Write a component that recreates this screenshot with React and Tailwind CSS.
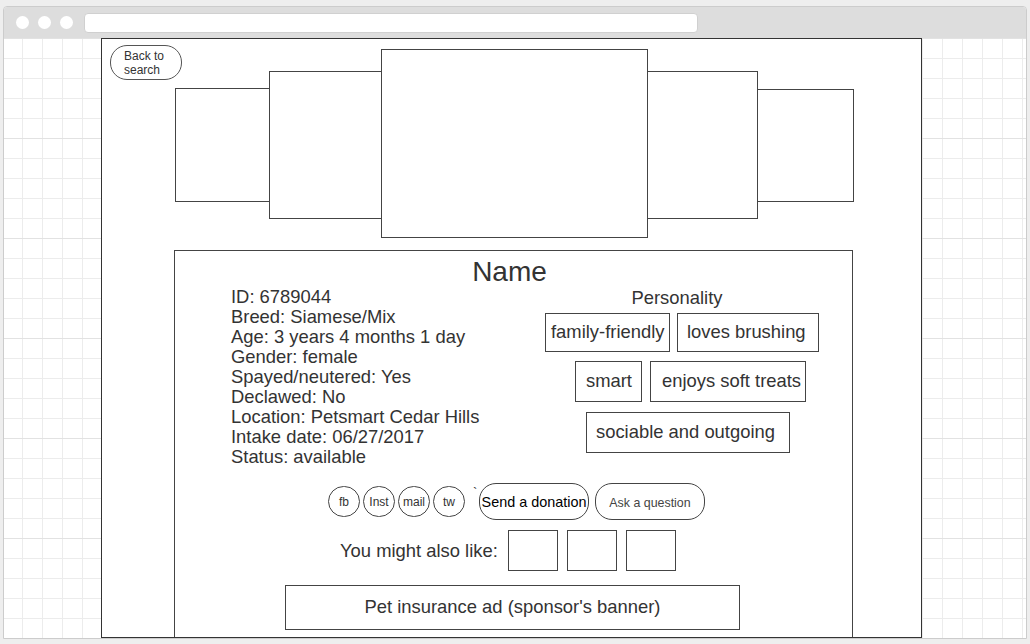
import React from "react";

const info = [
    "ID: 6789044",
    "Breed: Siamese/Mix",
    "Age: 3 years 4 months 1 day",
    "Gender: female",
    "Spayed/neutered: Yes",
    "Declawed: No",
    "Location: Petsmart Cedar Hills",
    "Intake date: 06/27/2017",
    "Status: available",
];

const socials = ["fb", "Inst", "mail", "tw"];

function Tag({ label, className }) {
    return (
        <div className={`flex items-center shrink-0 border border-[#444] whitespace-nowrap leading-[20px] pb-px ${className}`}>
            {label}
        </div>
    );
}

export default function App() {
    return (
        <div className="w-[1030px] h-[644px] bg-[#eeeeee] pt-[6px] pl-[3px] overflow-hidden font-['Liberation_Sans',Arial,sans-serif] text-[#333]">
            <div className="w-[1024px] h-[633px] rounded-t-[4px] border border-[#cccccc] bg-white flex flex-col overflow-hidden">
                {/* browser title bar */}
                <div className="h-[31px] shrink-0 bg-[#dddddd] flex items-center pl-[12px]">
                    <div className="flex gap-[9px]">
                        <span className="w-[13px] h-[13px] rounded-full bg-white" />
                        <span className="w-[13px] h-[13px] rounded-full bg-white" />
                        <span className="w-[13px] h-[13px] rounded-full bg-white" />
                    </div>
                    <div className="ml-[11px] w-[614px] h-[20px] rounded-[4px] bg-white border border-[#d0d0d0]" />
                </div>

                {/* grid canvas */}
                <div className="flex-1 bg-white bg-[linear-gradient(to_bottom,#e2e2e2_1px,transparent_1px),linear-gradient(to_right,#ececec_1px,transparent_1px),linear-gradient(to_bottom,#ececec_1px,transparent_1px)] bg-[size:100px_100px,20px_20px,20px_20px] bg-[position:18px_0px]">
                    <div className="ml-[97px] w-[821px] h-[600px] border border-[#333] bg-white overflow-hidden">
                        {/* back button + carousel */}
                        <div className="flex items-start pt-[6px] pl-[8px]">
                            <button className="w-[72px] h-[35px] shrink-0 rounded-[17px] border border-[#555] text-left pl-[13px] text-[12px] leading-[14px] text-[#333]">
                                Back to
                                <br />
                                search
                            </button>
                            <div className="flex items-start ml-[-7px] mt-[4px]">
                                <div className="w-[95px] h-[114px] mt-[39px] border border-[#444]" />
                                <div className="w-[113px] h-[148px] mt-[22px] -ml-px border border-[#444]" />
                                <div className="w-[267px] h-[189px] -ml-px border border-[#444]" />
                                <div className="w-[111px] h-[148px] mt-[22px] -ml-px border border-[#444]" />
                                <div className="w-[97px] h-[113px] mt-[40px] -ml-px border border-[#444]" />
                            </div>
                        </div>

                        {/* pet card */}
                        <div className="ml-[72px] mt-[12px] w-[679px] h-[420px] border border-[#444] text-[18.4px]">
                            <h1 className="pt-[5px] pr-[8px] text-center text-[28px] leading-[32px]">Name</h1>

                            <div className="flex pl-[56px]">
                                <div className="w-[314px] shrink-0 leading-[20px] -mt-px pb-px">
                                    {info.map((line) => (
                                        <div key={line}>{line}</div>
                                    ))}
                                </div>
                                <div className="w-[280px] shrink-0">
                                    <div className="w-[264px] text-center leading-[20px]">Personality</div>
                                    <div className="flex mt-[5px]">
                                        <Tag label="family-friendly" className="w-[125px] h-[39px] pl-[5px]" />
                                        <Tag label="loves brushing" className="w-[142px] h-[39px] pl-[9px] ml-[7px]" />
                                    </div>
                                    <div className="flex mt-[9px]">
                                        <Tag label="smart" className="w-[67px] h-[41px] pl-[10px] ml-[30px]" />
                                        <Tag label="enjoys soft treats" className="w-[156px] h-[41px] pl-[11px] ml-[8px]" />
                                    </div>
                                    <div className="flex mt-[10px]">
                                        <Tag label="sociable and outgoing" className="w-[204px] h-[41px] pl-[9px] ml-[41px]" />
                                    </div>
                                </div>
                            </div>

                            {/* share + actions */}
                            <div className="flex items-center mt-[15px] pl-[153px] h-[37px]">
                                <div className="flex gap-[3px]">
                                    {socials.map((s) => (
                                        <div
                                            key={s}
                                            className="w-[32px] h-[31px] rounded-full border border-[#444] flex items-center justify-center text-[12px]"
                                        >
                                            {s}
                                        </div>
                                    ))}
                                </div>
                                <span className="self-start ml-[8px] w-[5px] text-[13px] leading-[16px] mt-[2px]">`</span>
                                <button className="ml-[1px] w-[110px] h-[37px] shrink-0 rounded-[17px] border border-[#444] pt-[3px] text-center text-[14.4px] text-black whitespace-nowrap">
                                    Send a donation
                                </button>
                                <button className="ml-[6px] w-[110px] h-[37px] shrink-0 rounded-[17px] border border-[#444] pt-[3px] text-center text-[12.4px] text-[#444]">
                                    Ask a question
                                </button>
                            </div>

                            {/* related */}
                            <div className="flex items-center mt-[10px] pl-[165px]">
                                <span className="leading-[20px]">You might also like:</span>
                                <div className="flex gap-[9px] ml-[10px]">
                                    <div className="w-[50px] h-[41px] border border-[#444]" />
                                    <div className="w-[50px] h-[41px] border border-[#444]" />
                                    <div className="w-[50px] h-[41px] border border-[#444]" />
                                </div>
                            </div>

                            {/* sponsor banner */}
                            <div className="ml-[110px] mt-[14px] w-[455px] h-[45px] border border-[#444] flex items-center justify-center pb-[2px]">
                                Pet insurance ad (sponsor's banner)
                            </div>
                        </div>
                    </div>
                </div>
            </div>
        </div>
    );
}
